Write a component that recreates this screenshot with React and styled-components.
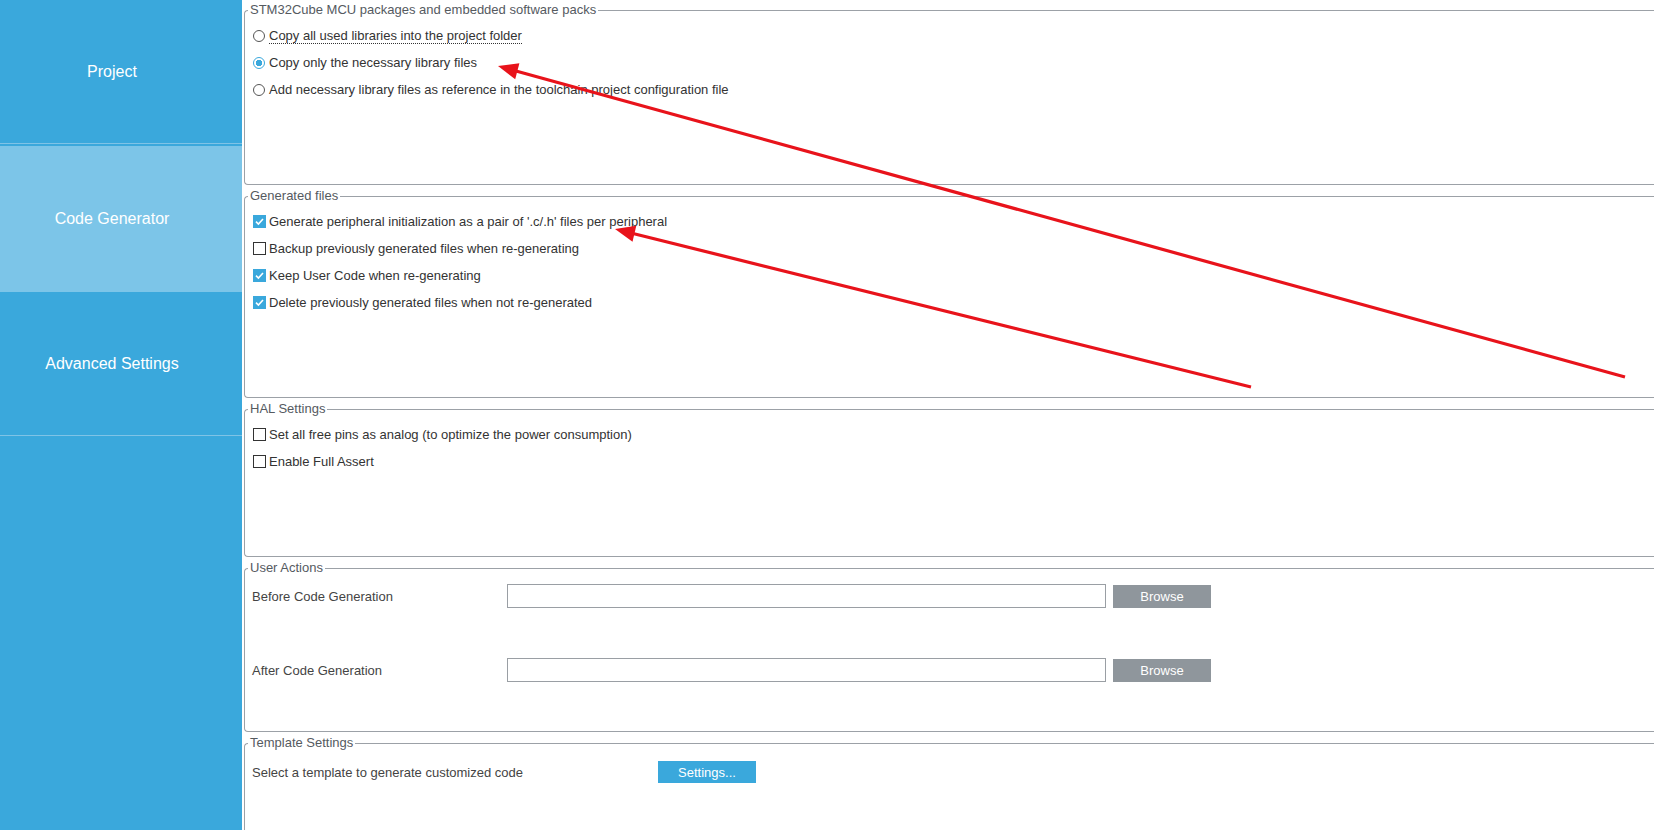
import React from 'react';
import styled, { createGlobalStyle } from 'styled-components';

const GlobalStyle = createGlobalStyle`
  html, body {
    margin: 0;
    padding: 0;
    background: #ffffff;
    overflow: hidden;
  }
  body {
    font-family: "Liberation Sans", Arial, sans-serif;
  }
`;

const Page = styled.div`
  position: relative;
  display: flex;
  width: 1654px;
  height: 830px;
  overflow: hidden;
`;

const Sidebar = styled.nav`
  display: flex;
  flex-direction: column;
  width: 242px;
  flex-shrink: 0;
  background: #3aa8dc;
`;

const Tab = styled.div`
  display: flex;
  justify-content: center;
  align-items: center;
  height: ${p => p.$height}px;
  margin-bottom: ${p => p.$gap || 0}px;
  padding-right: 18px;
  background: ${p => (p.$active ? '#7cc5e8' : '#3aa8dc')};
  border-bottom: ${p => (p.$active ? 'none' : '1px solid #7fc3e6')};
  color: #ffffff;
  font-size: 16px;
`;

const Content = styled.main`
  display: flex;
  flex-direction: column;
  gap: 4px;
  flex: 1;
  padding: 3px 0 0 2px;
`;

const Group = styled.fieldset`
  box-sizing: border-box;
  height: ${p => p.$height}px;
  margin: 0;
  min-width: 0;
  flex-shrink: 0;
  padding: 0 0 0 5px;
  border: 1px solid #9ca1a7;
  border-right: none;
  border-radius: 4px 0 0 4px;
`;

const Legend = styled.legend`
  padding: 0 2px;
  margin-left: -2px;
  font-size: 13px;
  line-height: 14px;
  color: #555a5f;
`;

const Options = styled.div`
  display: flex;
  flex-direction: column;
  padding: 5px 0 0 3px;
`;

const Option = styled.div`
  display: flex;
  align-items: center;
  height: ${p => p.$h || 27}px;
  font-size: 13px;
  color: #333333;
`;

const Radio = styled.span`
  box-sizing: border-box;
  width: 12px;
  height: 12px;
  margin-right: 4px;
  border-radius: 50%;
  border: 1px solid ${p => (p.$checked ? '#3aa8dc' : '#555')};
  background: ${p => (p.$checked ? 'radial-gradient(circle, #3aa8dc 0 3px, #ffffff 3.5px)' : '#ffffff')};
`;

const Box = styled.span`
  box-sizing: border-box;
  display: flex;
  align-items: center;
  justify-content: center;
  width: 13px;
  height: 13px;
  margin-right: 3px;
  border: 1px solid ${p => (p.$checked ? '#3aa8dc' : '#333')};
  background: ${p => (p.$checked ? '#3aa8dc' : '#ffffff')};
`;

const Focused = styled.span`
  border-bottom: 1px dotted #333;
  line-height: 15px;
  margin-top: 1px;
`;

const FieldRow = styled.div`
  display: flex;
  align-items: center;
  height: 24px;
  margin-top: ${p => p.$top}px;
  padding-left: 2px;
  font-size: 13px;
  color: #444;
`;

const FieldLabel = styled.span`
  width: ${p => p.$w}px;
  flex-shrink: 0;
`;

const TextInput = styled.div`
  box-sizing: border-box;
  width: 599px;
  height: 24px;
  border: 1px solid #9a9fa4;
  background: #fff;
`;

const Button = styled.div`
  display: flex;
  align-items: center;
  justify-content: center;
  width: ${p => p.$w}px;
  height: ${p => p.$h}px;
  margin-left: ${p => p.$ml || 0}px;
  background: ${p => p.$bg};
  color: #ffffff;
  font-size: 13px;
`;

const Overlay = styled.svg`
  position: absolute;
  left: 0;
  top: 0;
  pointer-events: none;
`;

function Check({ checked }) {
  return (
    <Box $checked={checked}>
      {checked && (
        <svg width="11" height="11" viewBox="0 0 11 11">
          <path d="M2 5.6 L4.4 8 L9 3" stroke="#fff" strokeWidth="1.6" fill="none" />
        </svg>
      )}
    </Box>
  );
}

function Arrow({ tail, tip, wings, base }) {
  return (
    <g>
      <line x1={tail[0]} y1={tail[1]} x2={base[0]} y2={base[1]} stroke="#e8131b" strokeWidth="3.2" />
      <polygon points={`${tip[0]},${tip[1]} ${wings[0][0]},${wings[0][1]} ${wings[1][0]},${wings[1][1]}`} fill="#e8131b" />
    </g>
  );
}

export default function App() {
  return (
    <Page>
      <GlobalStyle />
      <Sidebar>
        <Tab $height={143} $gap={2}>Project</Tab>
        <Tab $height={146} $active>Code Generator</Tab>
        <Tab $height={143}>Advanced Settings</Tab>
      </Sidebar>

      <Content>
        <Group $height={182}>
          <Legend>STM32Cube MCU packages and embedded software packs</Legend>
          <Options>
            <Option><Radio /><Focused>Copy all used libraries into the project folder</Focused></Option>
            <Option><Radio $checked />Copy only the necessary library files</Option>
            <Option><Radio />Add necessary library files as reference in the toolchain project configuration file</Option>
          </Options>
        </Group>

        <Group $height={209}>
          <Legend>Generated files</Legend>
          <Options>
            <Option><Check checked />Generate peripheral initialization as a pair of '.c/.h' files per peripheral</Option>
            <Option><Check />Backup previously generated files when re-generating</Option>
            <Option><Check checked />Keep User Code when re-generating</Option>
            <Option><Check checked />Delete previously generated files when not re-generated</Option>
          </Options>
        </Group>

        <Group $height={155}>
          <Legend>HAL Settings</Legend>
          <Options>
            <Option><Check />Set all free pins as analog (to optimize the power consumption)</Option>
            <Option><Check />Enable Full Assert</Option>
          </Options>
        </Group>

        <Group $height={171}>
          <Legend>User Actions</Legend>
          <FieldRow $top={9}>
            <FieldLabel $w={255}>Before Code Generation</FieldLabel>
            <TextInput />
            <Button $w={98} $h={23} $ml={7} $bg="#8f969c">Browse</Button>
          </FieldRow>
          <FieldRow $top={50}>
            <FieldLabel $w={255}>After Code Generation</FieldLabel>
            <TextInput />
            <Button $w={98} $h={23} $ml={7} $bg="#8f969c">Browse</Button>
          </FieldRow>
        </Group>

        <Group $height={120}>
          <Legend>Template Settings</Legend>
          <FieldRow $top={10}>
            <FieldLabel $w={406}>Select a template to generate customized code</FieldLabel>
            <Button $w={98} $h={22} $bg="#3aa8dc">Settings...</Button>
          </FieldRow>
        </Group>
      </Content>

      <Overlay width="1654" height="830">
        <Arrow tail={[1625, 377]} tip={[498, 66]} base={[516, 71]} wings={[[519.4, 63.2], [515.2, 79.2]]} />
        <Arrow tail={[1251, 387]} tip={[615, 229]} base={[633, 233.5]} wings={[[636.3, 225.8], [632.5, 241.8]]} />
      </Overlay>
    </Page>
  );
}
